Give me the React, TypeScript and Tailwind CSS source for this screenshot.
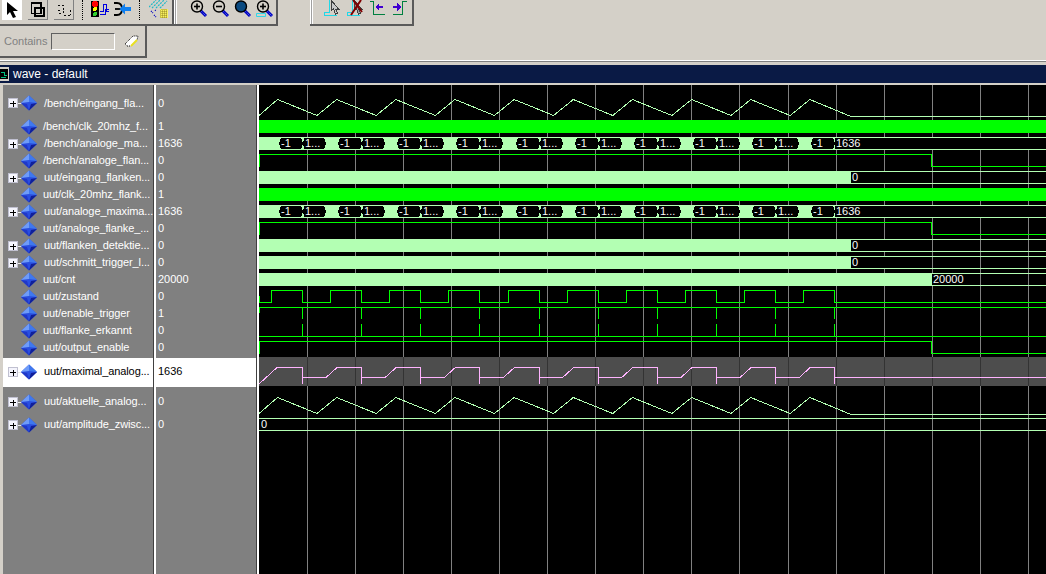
import React from 'react';

const font = { fontFamily: '"Liberation Sans", Tahoma, sans-serif' };

const GREEN = '#00ff00';
const LIGHT = '#b3ffb3';
const PINK = '#ffb3ff';
const PERIOD = 59.15;
const COUNT = 10;

type Row = { name: string; value: string; plus?: boolean; box: string };

const plain = 'h-[17px] bg-[#808080] text-white';
const rows: Row[] = [
  { name: '/bench/eingang_fla...', value: '0', plus: true, box: 'h-[33px] pt-[3px] bg-[#808080] text-white' },
  { name: '/bench/clk_20mhz_f...', value: '1', box: plain },
  { name: '/bench/analoge_ma...', value: '1636', plus: true, box: plain },
  { name: '/bench/analoge_flan...', value: '0', box: plain },
  { name: 'uut/eingang_flanken...', value: '0', plus: true, box: plain },
  { name: 'uut/clk_20mhz_flank...', value: '1', box: plain },
  { name: 'uut/analoge_maxima...', value: '1636', plus: true, box: plain },
  { name: 'uut/analoge_flanke_...', value: '0', box: plain },
  { name: 'uut/flanken_detektie...', value: '0', plus: true, box: plain },
  { name: 'uut/schmitt_trigger_l...', value: '0', plus: true, box: plain },
  { name: 'uut/cnt', value: '20000', box: plain },
  { name: 'uut/zustand', value: '0', box: plain },
  { name: 'uut/enable_trigger', value: '1', box: plain },
  { name: 'uut/flanke_erkannt', value: '0', box: plain },
  { name: 'uut/output_enable', value: '0', box: plain },
  { name: 'uut/maximal_analog...', value: '1636', plus: true, box: 'h-[29px] mt-[2px] pb-[2px] bg-white text-black' },
  { name: 'uut/aktuelle_analog...', value: '0', plus: true, box: 'h-[30px] pb-[1px] bg-[#808080] text-white' },
  { name: 'uut/amplitude_zwisc...', value: '0', plus: true, box: 'h-[16px] pb-[1px] bg-[#808080] text-white' },
];

const SignalIcon = ({ plus }: { plus?: boolean }) => (
  <svg width="34" height="16" viewBox="0 0 34 16" className="shrink-0">
    {plus && (
      <>
        <rect x="4.500" y="3.500" width="9" height="9" fill="#f4f4fc" stroke="#c0c0d0" shapeRendering="crispEdges" />
        <path d="M6 8.500h6M9 5.500v6" stroke="#000" shapeRendering="crispEdges" />
        <path d="M14 8.500h4" stroke="#e8e8e8" shapeRendering="crispEdges" />
      </>
    )}
    <polygon points="25,0.500 33,8 25,15.500 17,8" fill="#2a4fe0" />
    <polygon points="25,0.500 17,8 25,7" fill="#6f9cf8" />
    <polygon points="25,0.500 33,8 25,7" fill="#3f78ee" />
    <polygon points="33,8 25,15.500 27,9" fill="#10209a" />
    <polygon points="17,8 25,15.500 23,9" fill="#2038c8" />
  </svg>
);

// ---- toolbar icons ----
const ArrowIcon = () => (
  <svg width="20" height="20" viewBox="0 0 20 20">
    <path d="M5 2v13l3-3 3 6 3-1-3-6h5z" fill="#000" />
  </svg>
);

const ZoomBoxIcon = () => (
  <svg width="20" height="20" viewBox="0 0 20 20" fill="none" stroke="#000" shapeRendering="crispEdges">
    <path d="M3.500 2.500h10v11h-10z" strokeWidth="1.500" />
    <path d="M7.500 7.500h9v9h-9z" strokeWidth="2" />
  </svg>
);

const DottedIcon = () => (
  <svg width="20" height="20" viewBox="0 0 20 20" fill="none" stroke="#000" strokeDasharray="2 2" shapeRendering="crispEdges">
    <path d="M4.500 5.500h6v10h7" />
    <path d="M17.500 10v5" />
    <path d="M4 10h3M5.500 14h3" />
  </svg>
);

const TrafficIcon = () => (
  <svg width="20" height="18" viewBox="0 0 20 18" shapeRendering="crispEdges">
    <rect x="0" y="1" width="8" height="16" fill="#000" />
    <circle cx="4" cy="4" r="3" fill="#ff0000" />
    <circle cx="4" cy="9" r="2" fill="#ffff00" />
    <circle cx="4" cy="14" r="2" fill="#30d030" />
    <path d="M9 11.500h3V4.500h3v7h3M9 14.500h5V9.500h4" fill="none" stroke="#0000e0" />
  </svg>
);

const SplitIcon = () => (
  <svg width="18" height="18" viewBox="0 0 18 18">
    <path d="M0 3h3q5 0 5 6t-5 6H0" fill="none" stroke="#000" strokeWidth="1.800" />
    <path d="M1 9h6" stroke="#000" strokeWidth="1.800" />
    <path d="M17 7h-6V3.500L5.500 9l5.500 5.500V11h6z" fill="#1080f0" />
  </svg>
);

const HatchIcon = () => (
  <svg width="20" height="19" viewBox="0 0 20 19" fill="none">
    <path d="M0 7l7-7M3 8l8-8M7 8l8-8M11 8l7-7" stroke="#20b8c8" strokeWidth="1.200" strokeDasharray="2 1" />
    <path d="M2 11l2 2M5 15l2 2M6 10l1 1" stroke="#0000c0" strokeWidth="1.200" strokeDasharray="1 1" />
    <rect x="11" y="9" width="8" height="9" fill="#f8f060" />
    <path d="M13 9v9M15 9v9M17 9v9M11 11h8M11 13h8M11 15h8M11 17h8" stroke="#605000" strokeWidth="0.600" strokeDasharray="1 1" />
  </svg>
);

const Magnifier = ({ kind }: { kind: 'in' | 'out' | 'fit' | 'box' }) => (
  <svg width="18" height="18" viewBox="0 0 18 18" fill="none">
    <path d="M10 10l6 6" stroke="#0000c0" strokeWidth="3" />
    <path d="M10 10l6 6" stroke="#6080ff" strokeWidth="1" strokeDasharray="1 1" />
    <circle cx="7" cy="6.500" r="5.500" fill={kind === 'fit' ? '#0a4a80' : '#d4d0c8'} stroke="#000" strokeWidth="1.400" />
    {kind !== 'fit' && <path d="M4 6.500h6" stroke="#000" strokeWidth="1.600" />}
    {(kind === 'in' || kind === 'box') && <path d="M7 3.500v6" stroke="#000" strokeWidth="1.600" />}
    {kind === 'box' && <path d="M0.500 13.500h9v3h-9z" stroke="#30d8e8" />}
  </svg>
);

const CursorMark = ({ crossed }: { crossed?: boolean }) => (
  <svg width="17" height="16" viewBox="0 0 17 16" fill="none" shapeRendering="crispEdges">
    <path d="M5.500 0v12M5.500 12h-5v3h12" stroke="#20d8e8" />
    <path d="M7 0v11l2.500-2 2 5 2-1-2-4h3z" fill={crossed ? '#a0a0a0' : '#c8c8c8'} stroke="#404040" />
    {crossed && <path d="M6 0l9 12M14 0L4 15" stroke="#800000" strokeWidth="2" shapeRendering="auto" />}
  </svg>
);

const EdgeArrows = () => (
  <svg width="38" height="16" viewBox="0 0 38 16" fill="none" shapeRendering="crispEdges">
    <path d="M0.500 1.500h4v13h11M37.500 1.500h-4v13h-10" stroke="#008040" />
    <path d="M14 6H10V3L6 7l4 4V8H14zM24 6h4V3l4 4-4 4V8H24z" fill="#4000d0" />
  </svg>
);

const Eraser = () => (
  <svg width="15" height="13" viewBox="0 0 15 13" fill="none">
    <path d="M1 9l8-8h5l-1 4-6 6H3z" fill="#fff" stroke="#000" strokeDasharray="1 1" />
    <path d="M7 11l6-6" stroke="#e8e020" strokeWidth="2" />
  </svg>
);

const Dots = () => <div className="h-[20px] w-px border-l border-dotted border-black" />;

const Toolbar = () => (
  <div className="h-[60px] bg-[#d4d0c8]">
    <div className="flex h-[26px]">
      <div className="flex h-[26px] w-[174px] overflow-hidden border-r-2 border-b-2 border-[#5a5a5a]">
        <div className="ml-[2px] flex h-[20px] w-[20px] items-center justify-center bg-white"><ArrowIcon /></div>
        <div className="ml-[6px] flex h-[20px] w-[20px] items-center justify-center border-r border-b border-[#808080]"><ZoomBoxIcon /></div>
        <div className="ml-[6px] flex h-[20px] w-[20px] items-center justify-center border-r border-b border-[#808080]"><DottedIcon /></div>
        <div className="ml-[8px]"><Dots /></div>
        <div className="ml-[8px]"><TrafficIcon /></div>
        <div className="ml-[3px]"><SplitIcon /></div>
        <div className="ml-[7px]"><Dots /></div>
        <div className="ml-[9px]"><HatchIcon /></div>
      </div>
      <div className="flex h-[26px] w-[104px] border-r-2 border-b-2 border-[#5a5a5a]">
        <div className="h-[24px] w-[3px] border-x border-x-white bg-[#a0a0a0]" />
        <div className="ml-[13px] flex gap-[4px]">
          <Magnifier kind="in" />
          <Magnifier kind="out" />
          <Magnifier kind="fit" />
          <Magnifier kind="box" />
        </div>
      </div>
      <div className="ml-[32px] flex h-[26px] w-[104px] border-r-2 border-b-2 border-[#5a5a5a]">
        <div className="h-[24px] w-[3px] border-x border-x-white bg-[#a0a0a0]" />
        <div className="ml-[11px] flex gap-[6px]">
          <CursorMark />
          <CursorMark crossed />
        </div>
        <div className="ml-[5px]"><EdgeArrows /></div>
      </div>
    </div>
    <div className="flex h-[32px] w-[147px] items-center border-r-2 border-b-2 border-[#5a5a5a]">
      <span className="ml-[4px] w-[47px] text-[11px] text-[#808080]" style={font}>Contains</span>
      <div className="h-[17px] w-[64px] border-t border-l border-t-[#606060] border-l-[#606060] border-r border-b border-r-white border-b-white" />
      <div className="ml-[9px] flex"><Eraser /></div>
    </div>
  </div>
);

// ---- waveforms ----
const triangle = (low: number, high: number) => {
  const pts: string[] = ['259,' + low];
  for (let i = 0; i < COUNT; i++) {
    pts.push(`${277.5 + i * PERIOD},${high}`);
    if (i < COUNT - 1) pts.push(`${317 + i * PERIOD},${low}`);
  }
  pts.push(`851,${low + 1}`, `1046,${low + 1}`);
  return pts.join(' ');
};

const clockEdges = () => {
  let d = 'M259.5 296V302.5';
  for (let i = 0; i < COUNT; i++) {
    d += `H${Math.round(271 + i * PERIOD) + 0.5}V290.5H${Math.round(302 + i * PERIOD) + 0.5}V302.5`;
  }
  return d + 'H1046';
};

const maxWave = () => {
  let d = 'M259 384L277 367.5';
  for (let i = 0; i < COUNT; i++) {
    const fall = Math.round(302 + i * PERIOD) + 0.5;
    d += `H${fall}V384M${fall} 377.5`;
    if (i < COUNT - 1) {
      d += `H${326 + i * PERIOD}L${337 + i * PERIOD} 367.5`;
    }
  }
  return d + 'H1046';
};

const gridX = [307.5, 355.5, 403.5, 451.5, 499.5, 547.5, 595.5, 643.5, 691.5, 739.5, 788.5, 836.5, 884.5, 932.5, 980.5, 1028.5];

const WaveText = ({ x, y, children }: { x: number; y: number; children: React.ReactNode }) => (
  <text x={x} y={y} fill="#fff" fontSize="11" opacity="0.99" style={font}>{children}</text>
);

const Bus = ({ top }: { top: number }) => {
  const bottom = top + 12;
  const segs = Array.from({ length: COUNT }, (_, i) => Math.round(279 + i * PERIOD));
  return (
    <g>
      <rect x="259" y={top} width="576" height="13" fill={LIGHT} />
      {segs.map((x) => (
        <g key={x}>
          <polygon points={`${x},${top + 6.5} ${x + 2},${top + 1} ${x + 22},${top + 1} ${x + 24},${top + 6.5} ${x + 22},${bottom} ${x + 2},${bottom}`} fill="#000" />
          {x < 800 && (
            <polygon points={`${x + 24},${top + 6.5} ${x + 25},${top + 1} ${x + 45},${top + 1} ${x + 47},${top + 6.5} ${x + 45},${bottom} ${x + 25},${bottom}`} fill="#000" />
          )}
          <WaveText x={x + 2} y={top + 10}>-1</WaveText>
          {x < 800 && <WaveText x={x + 26} y={top + 10}>1...</WaveText>}
        </g>
      ))}
      <rect x="835" y={top} width="211" height="13" fill="#000" />
      <path d={`M835 ${top + 0.5}H1046M835 ${bottom + 0.5}H1046`} stroke={LIGHT} />
      <WaveText x={836} y={top + 10}>1636</WaveText>
    </g>
  );
};

const Solid = ({ top, end, label }: { top: number; end: number; label: string }) => (
  <g>
    <rect x="259" y={top} width={end - 259} height="13" fill={LIGHT} />
    <path d={`M${end} ${top + 0.5}H1046M${end} ${top + 12.5}H1046`} stroke={LIGHT} />
    <rect x={end} y={top + 1} width="40" height="11" fill="#000" />
    <WaveText x={end + 1} y={top + 10}>{label}</WaveText>
  </g>
);

const Waves = () => (
  <svg width="787" height="489" viewBox="259 85 787 489" className="block shrink-0 bg-black" shapeRendering="crispEdges">
    <rect x="259" y="357" width="787" height="29" fill="#4d4d4d" />
    {gridX.map((x) => (
      <g key={x}>
        <path d={`M${x} 85V357M${x} 386V574`} stroke="#808080" />
        <path d={`M${x} 357V386`} stroke="#333333" />
      </g>
    ))}
    <polyline points={triangle(115.5, 99.5)} fill="none" stroke={LIGHT} />
    <rect x="259" y="120" width="787" height="13" fill={GREEN} />
    <Bus top={137} />
    <path d="M259.5 167V154.5H931.5V166.5H1046" fill="none" stroke={GREEN} />
    <Solid top={171} end={851} label="0" />
    <rect x="259" y="188" width="787" height="13" fill={GREEN} />
    <Bus top={205} />
    <path d="M259.5 235V222.5H931.5V234.5H1046" fill="none" stroke={GREEN} />
    <Solid top={239} end={851} label="0" />
    <Solid top={256} end={851} label="0" />
    <Solid top={273} end={932} label="20000" />
    <path d={clockEdges()} fill="none" stroke={GREEN} />
    <path d="M259.5 313V307.5H1046" fill="none" stroke={GREEN} />
    <path d="M259 336.5H1046" fill="none" stroke={GREEN} />
    {Array.from({ length: COUNT }, (_, i) => Math.round(302 + i * PERIOD) + 0.5).map((x) => (
      <path key={x} d={`M${x} 307V319M${x} 324V336`} stroke={GREEN} />
    ))}
    <path d="M259.5 354V341.5H931.5V353.5H1046" fill="none" stroke={GREEN} />
    <path d={maxWave()} fill="none" stroke={PINK} />
    <polyline points={triangle(413.5, 397.5)} fill="none" stroke={LIGHT} />
    <path d="M259 418.5H1046M259 430.5H1046" stroke={LIGHT} />
    <WaveText x={261} y={428}>0</WaveText>
  </svg>
);

const Splitter = () => <div className="w-[3px] shrink-0 border-l border-l-[#404040] bg-white" />;

const App: React.FC = () => {
  return (
    <div className="h-[574px] w-[1046px] overflow-hidden bg-[#d4d0c8]" style={font}>
      <Toolbar />
      <div className="h-[2px] border-t border-t-white border-b border-b-[#808080]" />
      <div className="mt-[3px] flex h-[18px] items-center bg-[#0a1a45]">
        <svg width="10" height="14" viewBox="0 0 10 14" shapeRendering="crispEdges">
          <rect width="9" height="14" fill="#d4d0c8" />
          <rect y="2" width="8" height="10" fill="#000" />
          <path d="M1 5h3v3h3M1 10h5" stroke="#00c080" fill="none" />
        </svg>
        <span className="ml-[3px] text-[12px] text-white">wave - default</span>
      </div>
      <div className="h-[2px] bg-[#d4d0c8]" />
      <div className="flex h-[489px]">
        <div className="w-[3px] shrink-0 bg-[#d4d0c8]" />
        <div className="w-[150px] shrink-0 bg-[#808080]">
          {rows.map((r) => (
            <div key={r.name} className={`flex items-center whitespace-nowrap pl-[1px] text-[11px] tracking-[-0.1px] ${r.box}`}>
              <SignalIcon plus={r.plus} />
              <span className={r.plus ? 'ml-[6px]' : 'ml-[5px]'}>{r.name}</span>
            </div>
          ))}
        </div>
        <Splitter />
        <div className="w-[100px] shrink-0 bg-[#808080]">
          {rows.map((r) => (
            <div key={r.name} className={`flex items-center pl-[2px] text-[11px] ${r.box}`}>
              {r.value}
            </div>
          ))}
        </div>
        <Splitter />
        <Waves />
      </div>
    </div>
  );
};

export default App;
